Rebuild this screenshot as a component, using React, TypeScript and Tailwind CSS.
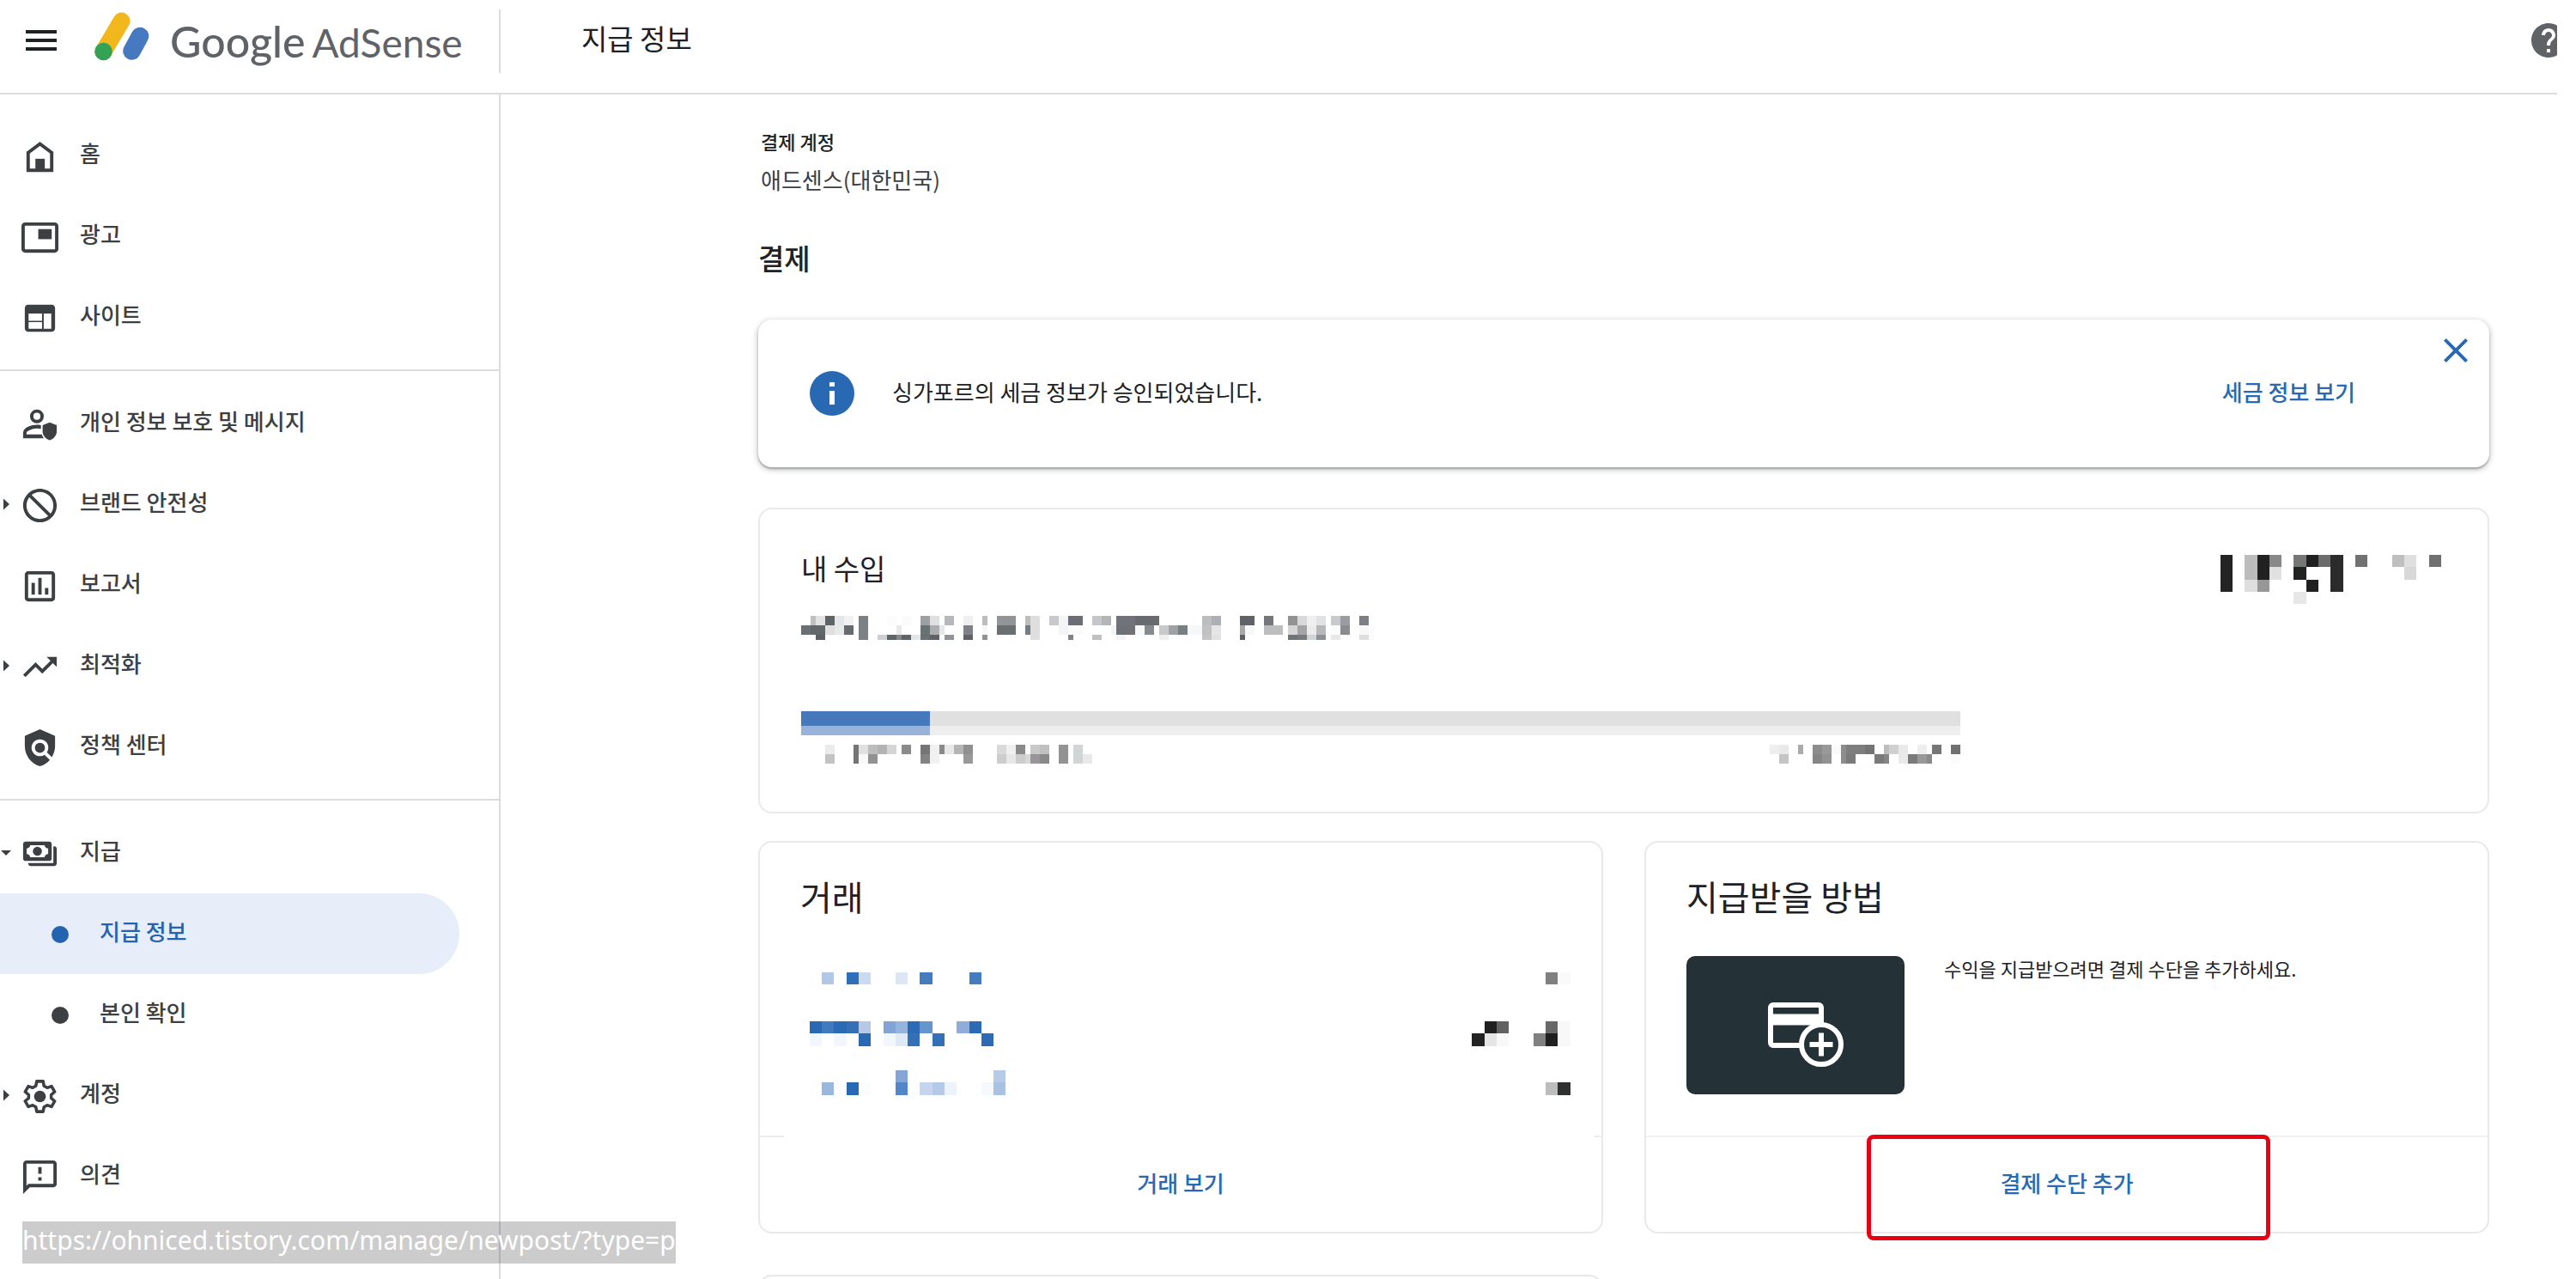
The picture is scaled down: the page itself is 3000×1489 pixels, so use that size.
import type { ReactNode } from "react";

type MosaicRow = { y: number; h: number; cells: string };

// Cells are written as "x:width:color"
const SUMMARY_MOSAIC: MosaicRow[] = [
  {
    y: 0,
    h: 11,
    cells:
      "11:6:bfc0c3 17:11:e2e2e3 28:11:5f6468 39:11:e4e7e9 50:11:f2f2f3 67:11:7d8084 100:11:fbfbfb 117:11:fbfbfb 139:11:9da0a3 150:11:e0e0e2 167:11:b5b7ba 189:11:efeff1 211:6:bdbdbf 228:22:939498 261:6:bdbdbf 267:11:dedede 289:11:c8c9cc 300:11:f3f4f5 311:17:6b6e76 339:11:c6c7ca 350:11:b4b5b9 367:22:70747a 389:28:686b70 467:11:bbbdc0 478:11:acb0b4 511:17:5f6266 539:11:74777c 567:11:929294 578:11:d8d8da 589:11:efefef 600:11:e1e2e4 617:11:c9cacd 628:11:9b9ca2 650:11:7c7f86",
  },
  {
    y: 11,
    h: 11,
    cells:
      "0:11:6a6f73 11:17:62676a 28:11:dfdfdf 39:11:e8e9e9 50:11:666b6f 67:11:7d8084 111:6:e9e9e9 139:11:6a7175 150:11:adadad 161:6:e5e8e8 189:11:7e8186 211:6:f7f7f7 228:22:6a6f72 261:6:777c82 267:11:dedede 300:11:f3f4f5 311:17:fbfbfb 361:6:f4f4f4 367:22:6e7277 389:11:f8f8f8 400:11:868b8f 417:11:c8c9cb 428:11:a0a1a5 439:11:787f83 450:17:f5f7f9 467:11:c0c1c3 478:11:e5e5e5 511:6:a8a8aa 517:11:f7f7f7 539:22:bcbebe 567:11:d5d5d6 578:11:a3a4a8 589:11:ebebeb 600:11:b7b8ba 617:11:fbfbfb 628:11:898d92 650:11:f8f8f8 661:6:fbfbfb",
  },
  {
    y: 22,
    h: 6,
    cells:
      "17:11:5d6165 67:11:7d8084 89:11:cfcfcf 100:11:5f6468 111:6:85888a 117:11:5f6468 128:11:e3e6e6 139:11:686f73 150:11:5d6266 167:11:919498 189:11:5f6266 211:6:8f9295 267:11:dedede 311:6:808488 339:11:c0c0c2 367:11:f4f4f4 417:11:eeeeee 467:11:c4c4c6 478:11:e2e2e2 511:6:5c6063 567:11:6f7376 578:11:777a7d 589:11:d0d4d4 600:11:8e9194 617:11:e8e8e8 650:11:dcdede 661:6:fafafa",
  },
];

const BALANCE_MOSAIC: MosaicRow[] = [
  {
    y: 0,
    h: 14,
    cells:
      "0:14:222322 28:15:bcbcbc 43:14:212121 57:14:888888 85:15:767676 100:14:202020 114:14:6c6c6c 128:15:2b2b2b 157:14:717171 200:14:bfbfbf 214:14:dfdfdf 243:14:707070",
  },
  {
    y: 14,
    h: 15,
    cells:
      "0:14:222322 28:15:bcbcbc 43:14:212121 57:14:e1e1e1 85:15:212321 128:15:2b2b2b 214:14:d8d8d8",
  },
  {
    y: 29,
    h: 14,
    cells: "0:14:222322 28:15:dedede 43:14:979797 100:14:202020 128:15:2b2b2b",
  },
  { y: 43, h: 14, cells: "85:15:e7e7e7" },
];

const PROGRESS_START_MOSAIC: MosaicRow[] = [
  {
    y: 0,
    h: 11,
    cells:
      "28:11:ebebeb 61:6:757575 67:11:e0e0e0 78:11:bdbdbd 89:11:b3b3b3 100:11:d5d5d5 117:11:8a8a8a 139:11:757575 150:11:f0f0ee 161:6:8a8a8a 167:11:e8e8e8 178:11:b5b5b5 189:11:909090 228:11:d9d9d9 239:11:efefef 250:11:8a8a8a 267:11:c8c8c8 278:11:c0c0c0 300:11:939393 317:11:d2d5d5",
  },
  {
    y: 11,
    h: 11,
    cells:
      "28:11:c3c3c3 61:6:757575 67:11:f8f8f8 78:11:919191 139:11:838383 150:11:f1f1f1 189:11:999999 228:11:cdcdcd 239:11:e7e7e7 250:11:cccccc 261:6:d8d8d8 267:11:979597 278:11:898989 300:11:939393 317:11:d2d5d5 328:11:e9e9e9",
  },
];

const PROGRESS_END_MOSAIC: MosaicRow[] = [
  {
    y: 0,
    h: 11,
    cells:
      "0:11:eeeeee 11:11:e9e9e9 33:6:aaaaaa 50:11:8c8c8c 61:11:999999 72:11:fafafa 83:6:8d8d8d 89:22:7e7e7e 111:11:747474 133:6:bdbdbd 139:11:d0d0d0 150:11:e9e9e9 172:11:eeeeee 189:11:757575 211:11:707070",
  },
  {
    y: 11,
    h: 11,
    cells:
      "11:11:c5c5c5 50:11:858585 61:11:929292 83:6:8d8d8d 89:11:7a7a7a 122:11:7a7a7a 133:6:868686 150:11:eaeaea 161:11:7a7a7a 172:11:999999 183:6:8a8a8a 211:11:fbfbfb",
  },
];

const TRANSACTIONS: { label: MosaicRow[]; amount: MosaicRow[] }[] = [
  {
    label: [
      {
        y: 0,
        h: 14,
        cells:
          "14:14:b3c8e6 43:14:2f6fb9 57:14:ccdaf0 100:14:dde6f5 128:15:447cbf 186:14:447cbf",
      },
    ],
    amount: [{ y: 0, h: 14, cells: "86:14:808080 100:15:fafafa" }],
  },
  {
    label: [
      {
        y: 0,
        h: 14,
        cells:
          "0:14:2969b4 14:14:4079bd 28:15:2b6ab5 43:14:3370b8 57:14:b5c8e6 86:14:82a5d5 100:14:96b3dc 114:14:2d6ab5 128:15:6495cb 171:15:8fadd8 186:14:2b6ab5",
      },
      {
        y: 14,
        h: 15,
        cells:
          "0:14:f2f7fd 28:15:f2f7fd 57:14:2969b4 86:14:f2f7fd 100:14:dfe8f5 114:14:3370b8 143:14:3370b8 200:14:2d6ab5",
      },
    ],
    amount: [
      { y: 0, h: 14, cells: "15:14:202020 29:14:616161 86:14:696969 100:15:f8f8f8" },
      {
        y: 14,
        h: 15,
        cells: "0:15:222222 15:14:e5e5e5 29:14:f8f8f8 72:14:808080 86:14:202020 100:15:f8f8f8",
      },
    ],
  },
  {
    label: [
      { y: 0, h: 14, cells: "100:14:84a5d6 214:14:b7cae8" },
      {
        y: 14,
        h: 15,
        cells:
          "14:14:9ab7de 43:14:2969b4 57:14:fafcfe 100:14:5386c8 128:15:c6d5ee 143:14:b5c9e8 157:14:edf3fa 200:14:f5f9fe 214:14:a9c2e4",
      },
    ],
    amount: [{ y: 14, h: 15, cells: "86:14:bdbdbd 100:15:2f3030" }],
  },
];

function Mosaic({ rows, width, height }: { rows: MosaicRow[]; width: number; height: number }) {
  return (
    <svg
      width={width}
      height={height}
      viewBox={`0 0 ${width} ${height}`}
      shapeRendering="crispEdges"
      className="shrink-0"
      aria-hidden="true"
    >
      {rows.map((row) =>
        row.cells.split(" ").map((cell) => {
          const [x, w, color] = cell.split(":");
          return (
            <rect
              key={`${row.y}-${x}`}
              x={x}
              y={row.y}
              width={w}
              height={row.h}
              fill={`#${color}`}
            />
          );
        }),
      )}
    </svg>
  );
}

function Icon({ children }: { children: ReactNode }) {
  return (
    <svg viewBox="0 0 24 24" className="size-[47px] shrink-0" fill="currentColor" aria-hidden="true">
      {children}
    </svg>
  );
}

const ICONS = {
  home: (
    <>
      <path d="M5 20V9.6L12 4.3l7 5.3V20z" fill="none" stroke="currentColor" strokeWidth="2" />
      <path d="M9.3 13.2h5.6V20H9.3z" />
    </>
  ),
  ads: (
    <>
      <rect x="2" y="4" width="20" height="16" rx="1.2" fill="none" stroke="currentColor" strokeWidth="2" />
      <path d="M11 7h8v6h-8z" />
    </>
  ),
  sites: (
    <path d="M20 4H4c-1.100 0-1.990.9-1.990 2L2 18c0 1.100.9 2 2 2h16c1.100 0 2-.9 2-2V6c0-1.100-.9-2-2-2zM4.500 18.200v-3.900h8.900v3.900zm0-4.700V9.200h8.900v4.300zm15 4.700h-5V9.200h5z" transform="translate(1.200 0) scale(.9 1)" />
  ),
  privacy: (
    <>
      <circle cx="10.200" cy="7" r="3.100" fill="none" stroke="currentColor" strokeWidth="2" />
      <path d="M12.600 12.200c-.8-.13-1.600-.2-2.400-.2-3 0-8.200 1.500-8.200 4.800V20h12.300a8 8 0 0 1-1.200-2.200H4v-1c0-.9 3.300-2.600 6.200-2.600.85 0 1.650.1 2.400.27z" />
      <path d="M17.800 10.600 22 12.200v3.800c0 2.500-1.800 4.400-4.200 5.200-2.400-.8-4.200-2.700-4.200-5.200v-3.800z" />
    </>
  ),
  block: (
    <path d="M12 2C6.480 2 2 6.480 2 12s4.480 10 10 10 10-4.480 10-10S17.520 2 12 2zM4 12c0-4.420 3.580-8 8-8 1.850 0 3.550.63 4.900 1.690L5.690 16.900C4.630 15.550 4 13.850 4 12zm8 8c-1.850 0-3.550-.63-4.900-1.690L18.310 7.100C19.370 8.450 20 10.150 20 12c0 4.420-3.580 8-8 8z" transform="matrix(-1 0 0 1 24 0)" />
  ),
  reports: (
    <path d="M19 3H5c-1.100 0-2 .9-2 2v14c0 1.100.9 2 2 2h14c1.100 0 2-.9 2-2V5c0-1.100-.9-2-2-2zm0 16H5V5h14v14zM7 10h2v7H7zm4-3h2v10h-2zm4 6h2v4h-2z" />
  ),
  optimize: (
    <path d="M16 6l2.290 2.290-4.880 4.880-4-4L2 16.590 3.410 18l6-6 4 4 6.300-6.290L22 12V6z" />
  ),
  policy: (
    <path d="M21 5l-9-4-9 4v6c0 5.550 3.840 10.740 9 12 2.300-.56 4.330-1.900 5.880-3.710l-3.120-3.120c-1.940 1.290-4.580 1.070-6.290-.64-1.950-1.950-1.950-5.120 0-7.070 1.950-1.950 5.120-1.950 7.070 0 1.710 1.710 1.920 4.350.64 6.290l2.900 2.900C20.290 15.690 21 13.380 21 11V5zM12 9a3 3 0 1 0 0 6 3 3 0 0 0 0-6z" />
  ),
  payments: (
    <>
      <path
        fillRule="evenodd"
        d="M3.500 4.500h14c.83 0 1.500.67 1.500 1.500v8.500c0 .83-.67 1.500-1.500 1.500h-14c-.83 0-1.500-.67-1.500-1.500V6c0-.83.67-1.500 1.500-1.500zM6.200 6.700c0 1-.9 1.900-2.100 1.900v3.300c1.200 0 2.100.9 2.100 1.900h8.600c0-1 .9-1.900 2.100-1.900V8.600c-1.200 0-2.100-.9-2.100-1.900z"
      />
      <circle cx="10.500" cy="10.250" r="2.700" />
      <path d="M20 7.300h.5c.83 0 1.500.67 1.500 1.500V17.500c0 .83-.67 1.500-1.500 1.500H6.500c-.7 0-1.300-.5-1.500-1.200V17.200h15z" />
    </>
  ),
  account: (
    <>
      <path
        d="M13.900 3h-3.800l-.5 2.700-1.900 1.100-2.600-.9-1.900 3.300 2.100 1.800v2l-2.100 1.800 1.900 3.300 2.600-.9 1.900 1.100.5 2.700h3.800l.5-2.700 1.900-1.100 2.600.9 1.900-3.300-2.100-1.800v-2l2.100-1.800-1.900-3.300-2.600.9-1.900-1.100z"
        fill="none"
        stroke="currentColor"
        strokeWidth="1.800"
        strokeLinejoin="round"
      />
      <circle cx="12" cy="12" r="3.500" />
    </>
  ),
  feedback: (
    <path d="M20 2H4c-1.100 0-1.990.9-1.990 2L2 22l4-4h14c1.100 0 2-.9 2-2V4c0-1.100-.9-2-2-2zm0 14H5.170L4 17.170V4h16v12zM11 12h2v2h-2zm0-6h2v4h-2z" />
  ),
};

type NavItem = {
  label: string;
  icon?: keyof typeof ICONS;
  arrow?: "right" | "down";
  active?: boolean;
};

const NAV_GROUPS: NavItem[][] = [
  [
    { label: "홈", icon: "home" },
    { label: "광고", icon: "ads" },
    { label: "사이트", icon: "sites" },
  ],
  [
    { label: "개인 정보 보호 및 메시지", icon: "privacy" },
    { label: "브랜드 안전성", icon: "block", arrow: "right" },
    { label: "보고서", icon: "reports" },
    { label: "최적화", icon: "optimize", arrow: "right" },
    { label: "정책 센터", icon: "policy" },
  ],
  [
    { label: "지급", icon: "payments", arrow: "down" },
    { label: "지급 정보", active: true },
    { label: "본인 확인" },
    { label: "계정", icon: "account", arrow: "right" },
    { label: "의견", icon: "feedback" },
  ],
];

function NavLink({ item }: { item: NavItem }) {
  if (!item.icon) {
    return (
      <a
        href="#"
        className={`mr-[46px] flex h-[94px] items-center rounded-r-full pl-[60px] ${
          item.active ? "bg-[#e7edf9] text-[#2463b0]" : "text-[#3c4043]"
        }`}
      >
        <span className="mt-0.5 size-5 shrink-0 rounded-full bg-current" />
        <span className="mb-1.5 ml-9 font-medium">{item.label}</span>
      </a>
    );
  }
  return (
    <a href="#" className="flex h-[94px] items-center text-[#3c4043]">
      <span className="w-[23px] shrink-0">
        {item.arrow && (
          <svg width="22" height="22" viewBox="0 0 22 22" fill="currentColor" aria-hidden="true">
            {item.arrow === "right" ? <path d="M4 4.500v13l7-6.500z" /> : <path d="M1 8h12l-6 6z" />}
          </svg>
        )}
      </span>
      <span className="mt-0.5 shrink-0">
        <Icon>{ICONS[item.icon]}</Icon>
      </span>
      <span className="mb-1.5 ml-[23px] font-medium">{item.label}</span>
    </a>
  );
}

function Header() {
  return (
    <header className="flex h-[110px] shrink-0 items-start overflow-hidden border-b-2 border-[#dadce0]">
      <div className="flex h-full w-[581px] shrink-0 items-start">
        <button type="button" aria-label="메뉴" className="ml-6 mt-[23px] text-[#202124]">
          <svg viewBox="0 0 24 24" className="size-12" fill="currentColor">
            <path d="M3 18h18v-2H3v2zm0-5h18v-2H3v2zm0-7v2h18V6H3z" />
          </svg>
        </button>
        <a href="#" className="ml-[38px] flex items-start">
          <svg width="64" height="60" viewBox="0 0 64 60" fill="none" strokeLinecap="round" className="mt-3">
            <path d="M10.500 48 31.500 12.500" stroke="#f2b71d" strokeWidth="20" />
            <path d="M43.500 47.500 53 30" stroke="#4679bf" strokeWidth="20.500" />
            <circle cx="10.500" cy="48" r="10.300" fill="#34a255" />
          </svg>
          <span className="ml-6 mt-2 flex items-baseline gap-2 font-[Lato] text-[50px] leading-[80px] text-[#5f6368]">
            <span className="font-medium">Google</span>
            <span className="text-[46px]">AdSense</span>
          </span>
        </a>
      </div>
      <div className="mt-[11px] h-[74px] w-[2px] shrink-0 bg-[#dadce0]" />
      <h1 className="ml-[94px] mt-5 flex-1 text-[33px] leading-[48px] text-[#202124]">
        지급 정보
      </h1>
      <button type="button" aria-label="도움말" className="-mr-[14px] mt-[23px] text-[#5f6368]">
        <svg viewBox="0 0 24 24" className="size-12" fill="currentColor">
          <path d="M12 2C6.480 2 2 6.480 2 12s4.480 10 10 10 10-4.480 10-10S17.520 2 12 2zm1 17h-2v-2h2v2zm2.070-7.750l-.9.920C13.450 12.900 13 13.500 13 15h-2v-.5c0-1.100.45-2.100 1.170-2.830l1.240-1.260c.37-.36.59-.86.59-1.410 0-1.100-.9-2-2-2s-2 .9-2 2H8c0-2.210 1.790-4 4-4s4 1.790 4 4c0 .88-.36 1.680-.93 2.250z" />
        </svg>
      </button>
    </header>
  );
}

function Notice() {
  return (
    <section className="relative mt-12 flex h-[172px] items-center rounded-2xl bg-white pl-[60px] pr-[156px] shadow-[0_2px_6px_1px_rgba(60,64,67,0.3),0_2px_2px_rgba(60,64,67,0.3)]">
      <svg viewBox="0 0 52 52" className="size-[52px] shrink-0" aria-hidden="true">
        <circle cx="26" cy="26" r="26" fill="#2969b4" />
        <path d="M23 13h6v5h-6zm0 10h6v16h-6z" fill="#fff" />
      </svg>
      <p className="mb-1 ml-11 flex-1 text-[#202124]">싱가포르의 세금 정보가 승인되었습니다.</p>
      <a href="#" className="mb-1 font-medium text-[#2969b4]">
        세금 정보 보기
      </a>
      <button type="button" aria-label="닫기" className="absolute right-[15px] top-3 text-[#2969b4]">
        <svg viewBox="0 0 24 24" className="size-12" fill="currentColor">
          <path d="M19 6.410L17.590 5 12 10.590 6.410 5 5 6.410 10.590 12 5 17.590 6.410 19 12 13.410 17.590 19 19 17.590 13.410 12z" />
        </svg>
      </button>
    </section>
  );
}

function Earnings() {
  return (
    <section className="mt-[47px] rounded-2xl border-2 border-[#e9e9ed] pb-14 pl-12 pr-[54px] pt-11">
      <div className="flex items-start justify-between">
        <div>
          <h2 className="text-[33px] leading-[48px] text-[#202124]">내 수입</h2>
          <div className="mt-8">
            <Mosaic rows={SUMMARY_MOSAIC} width={668} height={28} />
          </div>
        </div>
        <div className="mt-[9px]">
          <Mosaic rows={BALANCE_MOSAIC} width={257} height={57} />
        </div>
      </div>
      <div className="mt-[83px] w-[1350px] max-w-full">
        <div className="flex">
          <div className="w-[150px]">
            <div className="h-[17px] bg-[#4679bc]" />
            <div className="h-[11px] bg-[#98b2da]" />
          </div>
          <div className="flex-1">
            <div className="h-[17px] bg-[#e0e0e0]" />
            <div className="h-[11px] bg-[#eeeeee]" />
          </div>
        </div>
        <div className="mt-[11px] flex justify-between">
          <Mosaic rows={PROGRESS_START_MOSAIC} width={340} height={22} />
          <Mosaic rows={PROGRESS_END_MOSAIC} width={222} height={22} />
        </div>
      </div>
    </section>
  );
}

function Transactions() {
  return (
    <section className="flex flex-col rounded-2xl border-2 border-[#e9e9ed]">
      <h2 className="ml-[47px] mr-12 mt-[34px] text-[40px] leading-[56px] text-[#202124]">거래</h2>
      <ul className="ml-[58px] mr-9 mt-[61px]">
        {TRANSACTIONS.map((row, i) => (
          <li key={i} className="flex h-[57px] items-start justify-between">
            <Mosaic rows={row.label} width={228} height={29} />
            <Mosaic rows={row.amount} width={115} height={29} />
          </li>
        ))}
      </ul>
      <div className="mt-[19px] flex justify-between">
        <div className="h-[2px] w-7 bg-[#ededf0]" />
        <div className="h-[2px] w-2 bg-[#ededf0]" />
      </div>
      <div className="flex h-[110px] items-center justify-center pb-1">
        <a href="#" className="font-medium text-[#2969b4]">
          거래 보기
        </a>
      </div>
    </section>
  );
}

function PaymentMethod() {
  return (
    <section className="flex flex-col rounded-2xl border-2 border-[#e9e9ed]">
      <h2 className="ml-[47px] mr-12 mt-[34px] text-[40px] leading-[56px] text-[#202124]">지급받을 방법</h2>
      <div className="ml-[47px] mr-12 mt-[42px] flex items-start">
        <div className="flex h-[161px] w-[254px] shrink-0 items-center justify-center rounded-[10px] bg-[#243238] pl-6 pt-5">
          <svg width="90" height="78" viewBox="0 0 90 78" fill="none" stroke="#fff" aria-hidden="true">
            <rect x="4" y="5" width="59" height="47" rx="3" strokeWidth="6" />
            <path d="M4 22h59" strokeWidth="13" />
            <circle cx="63" cy="51" r="23" fill="#243238" strokeWidth="6" />
            <path d="M63 37.500v27M49.500 51h27" strokeWidth="6" />
          </svg>
        </div>
        <p className="-mt-[2px] ml-[46px] text-[22px] leading-8 text-[#202124]">
          수익을 지급받으려면 결제 수단을 추가하세요.
        </p>
      </div>
      <div className="relative mt-auto flex h-[112px] items-center justify-center border-t-2 border-[#f1f1f3] pb-1">
        <a href="#" className="font-medium text-[#2969b4]">
          결제 수단 추가
        </a>
        <div className="pointer-events-none absolute -top-[3px] left-1/2 ml-0.5 h-[123px] w-[470px] -translate-x-1/2 rounded-lg border-[5px] border-[#eb0011]" />
      </div>
    </section>
  );
}

export default function App() {
  return (
    <div className="relative flex h-screen flex-col overflow-hidden bg-white pr-[22px] font-['Noto_Sans_CJK_KR',sans-serif] text-[26px] leading-10">
      <Header />
      <div className="flex min-h-0 flex-1">
        <nav className="w-[583px] shrink-0 border-r-2 border-[#dadce0] pt-6">
          {NAV_GROUPS.map((group, i) => (
            <div key={i} className={i > 0 ? "mt-3.5 border-t-2 border-[#dadce0] pt-3.5" : ""}>
              {group.map((item) => (
                <NavLink key={item.label} item={item} />
              ))}
            </div>
          ))}
        </nav>
        <main className="min-w-0 flex-1 pl-[300px] pr-[79px] pt-[38px]">
          <p className="ml-[3px] text-[22px] font-medium leading-8 text-[#202124]">결제 계정</p>
          <p className="ml-[3px] mt-[9px] text-[#3c4043]">애드센스(대한민국)</p>
          <h2 className="mt-[47px] text-[33px] font-medium leading-[48px] text-[#202124]">결제</h2>
          <Notice />
          <Earnings />
          <div className="mt-8 grid grid-cols-2 gap-12">
            <Transactions />
            <PaymentMethod />
            <section className="h-[400px] rounded-2xl border-2 border-[#e9e9ed]" />
          </div>
        </main>
      </div>
      <div className="absolute bottom-[18px] left-[26px] whitespace-nowrap bg-black/20 pb-1.5 font-['Noto_Sans',sans-serif] text-[30px] leading-[43px] text-white">
        https://ohniced.tistory.com/manage/newpost/?type=p
      </div>
    </div>
  );
}
